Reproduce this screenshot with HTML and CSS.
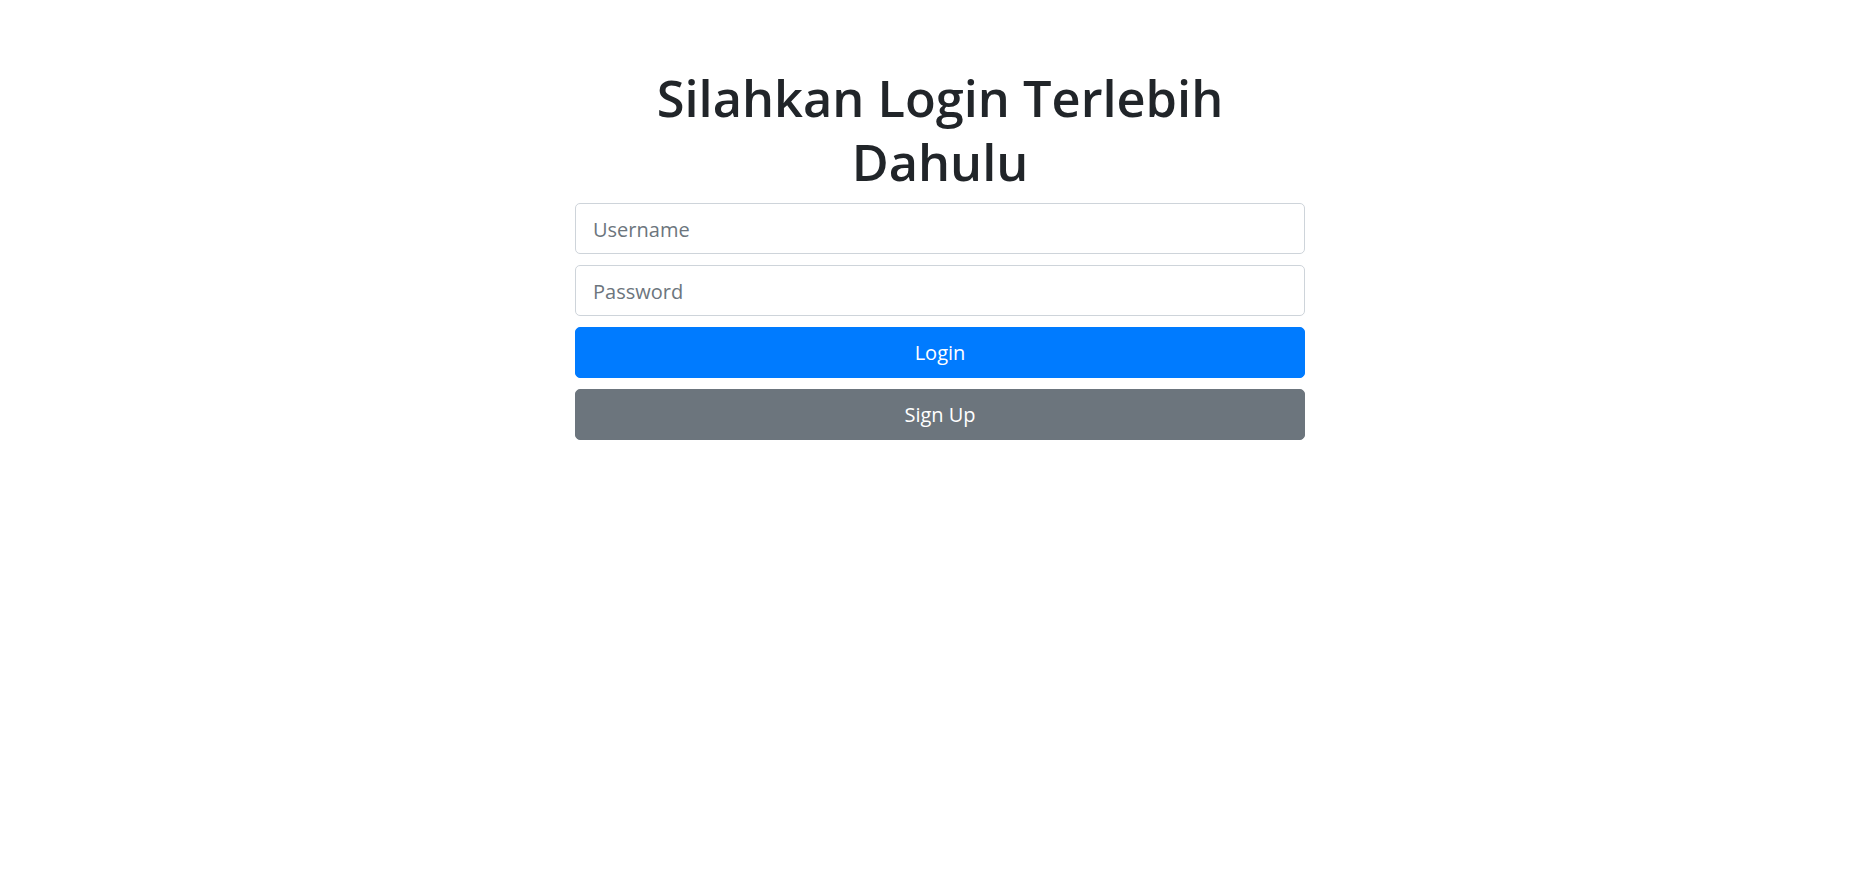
FILE: index.html
```html
<!DOCTYPE html>
<html lang="id">
<head>
<meta charset="utf-8">
<title>Login</title>
<link rel="stylesheet" href="styles.css">
</head>
<body>
<main class="page">
  <form class="login">
    <h1 class="title">Silahkan Login Terlebih Dahulu</h1>
    <input class="field" type="text" placeholder="Username">
    <input class="field" type="password" placeholder="Password">
    <button class="btn btn-primary" type="button">Login</button>
    <button class="btn btn-secondary" type="button">Sign Up</button>
  </form>
</main>
</body>
</html>
```
FILE: styles.css
```css
* { box-sizing: border-box; }
html, body { margin: 0; background: #fff; }
body {
  font-family: "Open Sans", "Noto Sans", "Liberation Sans", sans-serif;
  color: #212529;
}
.page {
  display: flex;
  justify-content: center;
  padding: 64px 0 0 8px;
}
.login {
  width: 730px;
  display: flex;
  flex-direction: column;
  gap: 11px;
}
.title {
  margin: 0;
  padding-top: 2px;
  margin-bottom: -2px;
  font-size: 50.5px;
  line-height: 64px;
  font-weight: 600;
  text-align: center;
  color: #212529;
}
.field {
  height: 51px;
  width: 100%;
  border: 1px solid #ced4da;
  border-radius: 5px;
  padding: 1px 17px 0;
  font-family: inherit;
  font-size: 20px;
  color: #495057;
  background: #fff;
}
.field::placeholder { color: #6c757d; opacity: 1; }
.btn {
  height: 51px;
  width: 100%;
  border: 1px solid transparent;
  border-radius: 5px;
  font-family: inherit;
  font-size: 20px;
  color: #fff;
  cursor: pointer;
}
.btn-primary { background: #007bff; border-color: #007bff; }
.btn-secondary { background: #6c757d; border-color: #6c757d; }
```
